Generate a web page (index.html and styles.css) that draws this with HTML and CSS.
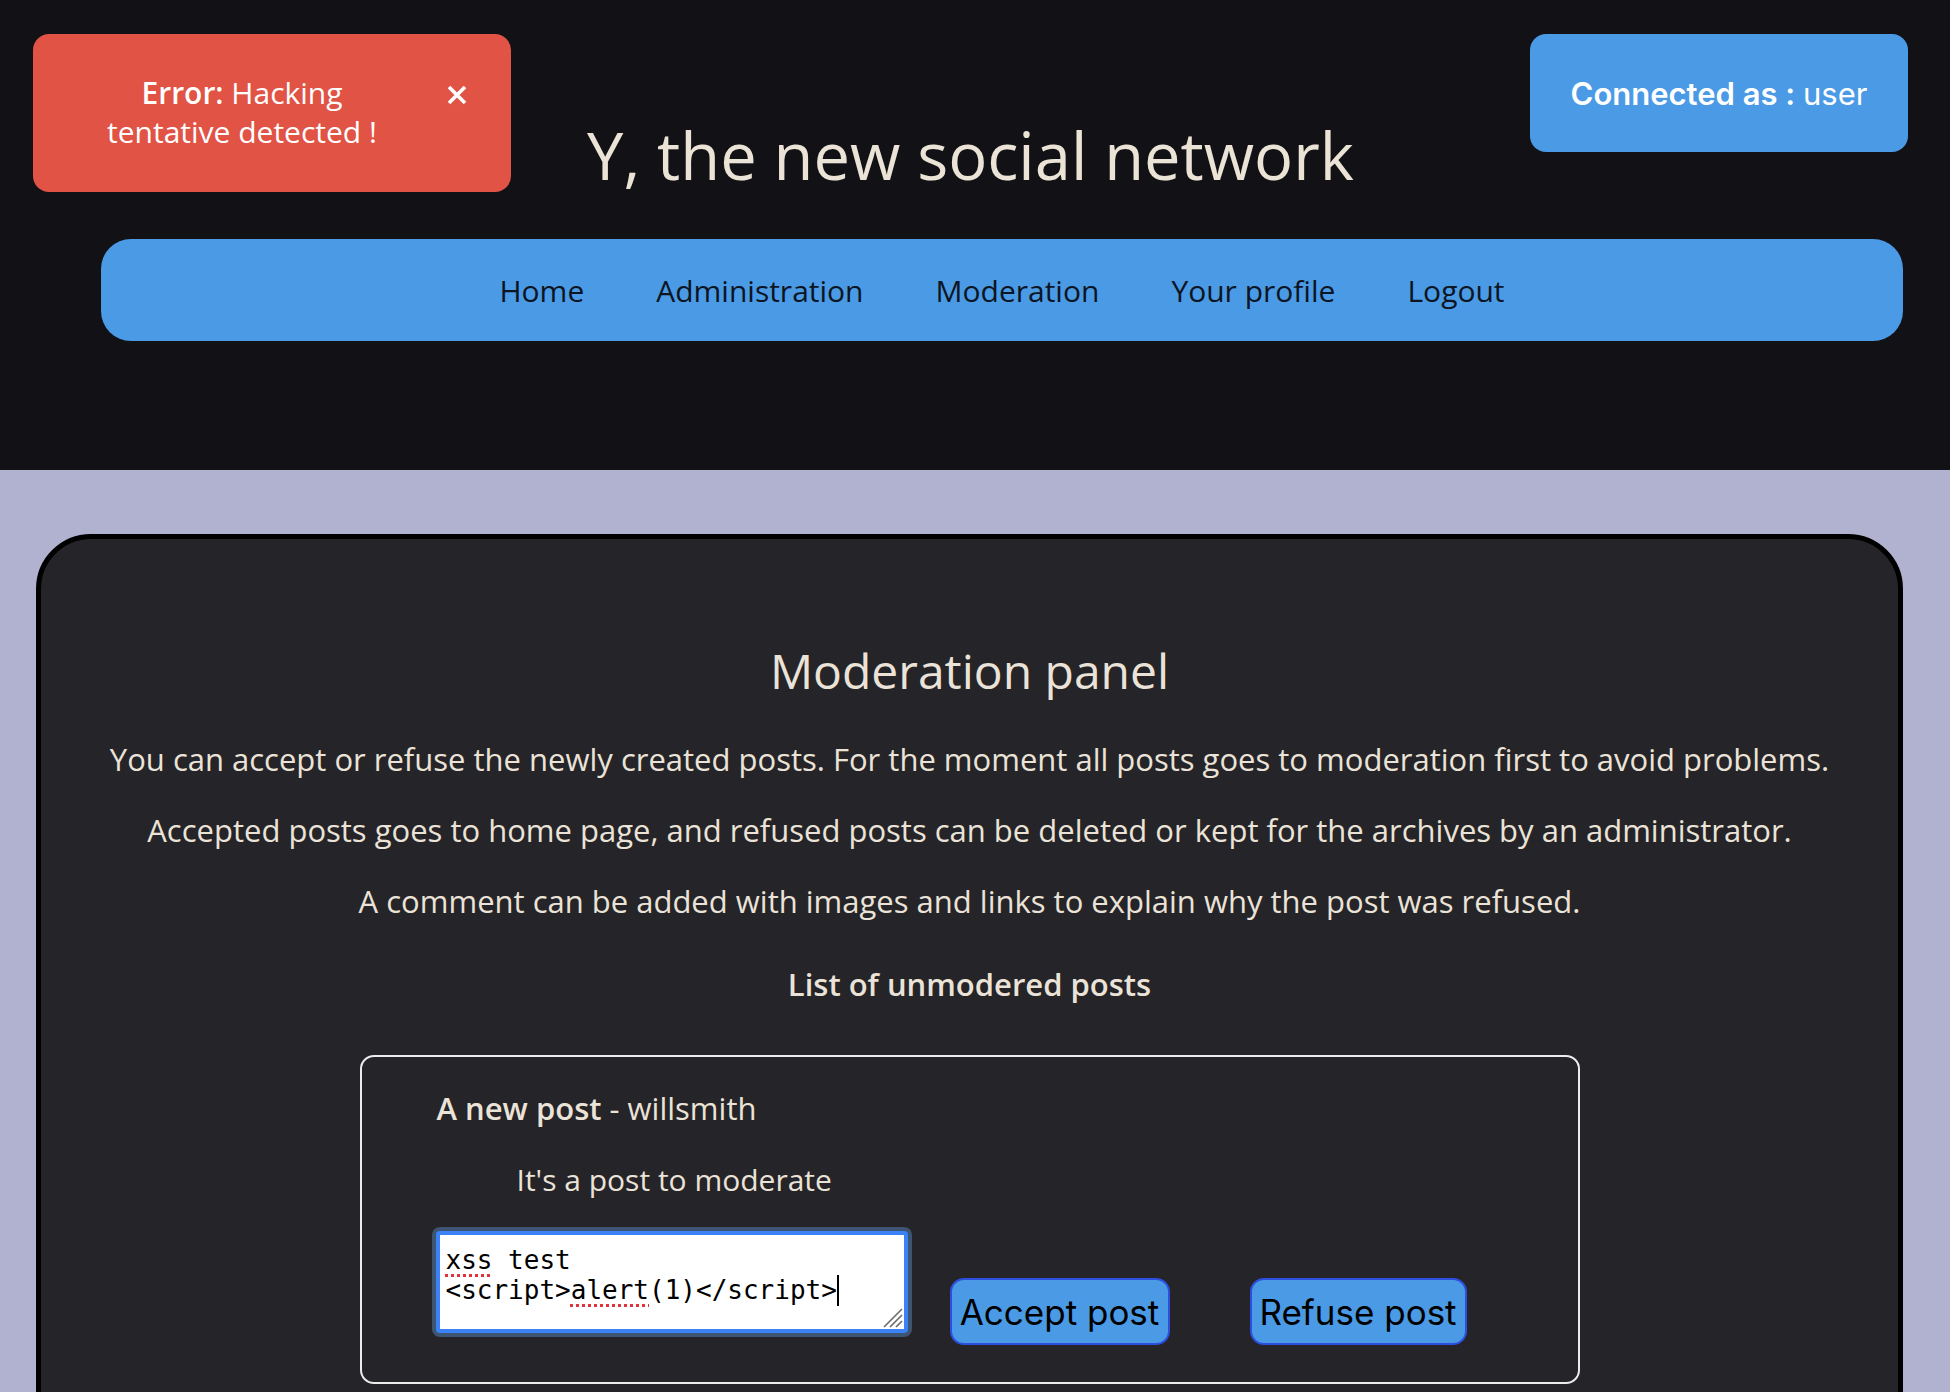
FILE: index.html
```html
<!DOCTYPE html>
<html lang="en">
<head>
<meta charset="utf-8">
<title>Y, the new social network - Moderation</title>
<link rel="stylesheet" href="styles.css">
</head>
<body>
<header class="site-header">
  <div class="top-row">
    <div class="toast" role="alert">
      <p class="toast-text"><strong>Error:</strong> Hacking tentative detected !</p>
      <button class="toast-close" aria-label="Close">
        <svg viewBox="0 0 22 20" width="22" height="20" aria-hidden="true"><path d="M3 2 L19 18 M19 2 L3 18" stroke="#fff" stroke-width="3.6" stroke-linecap="butt" fill="none"/></svg>
      </button>
    </div>
    <h1 class="site-title">Y, the new social network</h1>
    <div class="connected"><span class="connected-label">Connected as :</span> user</div>
  </div>
  <nav class="main-nav">
    <a href="#">Home</a>
    <a href="#">Administration</a>
    <a href="#">Moderation</a>
    <a href="#">Your profile</a>
    <a href="#">Logout</a>
  </nav>
</header>
<main class="page">
  <section class="panel">
    <h2 class="panel-title">Moderation panel</h2>
    <p class="panel-text">You can accept or refuse the newly created posts. For the moment all posts goes to moderation first to avoid problems.</p>
    <p class="panel-text">Accepted posts goes to home page, and refused posts can be deleted or kept for the archives by an administrator.</p>
    <p class="panel-text">A comment can be added with images and links to explain why the post was refused.</p>
    <h3 class="list-title">List of unmodered posts</h3>
    <article class="post">
      <h4 class="post-title"><strong>A new post</strong> - willsmith</h4>
      <p class="post-body">It's a post to moderate</p>
      <form class="post-actions">
        <div class="comment-box" role="textbox" aria-multiline="true"><span class="misspelled">xss</span> test<br>&lt;script&gt;<span class="misspelled">alert</span>(1)&lt;/script&gt;<span class="caret"></span>
          <svg class="grip" viewBox="0 0 24 24" width="24" height="24" aria-hidden="true"><path d="M23 5 L5 23 M23 11 L11 23 M23 17 L17 23" stroke="#6f6f6f" stroke-width="1.7" fill="none"/></svg>
        </div>
        <button type="button" class="btn btn-accept">Accept post</button>
        <button type="button" class="btn btn-refuse">Refuse post</button>
      </form>
    </article>
  </section>
</main>
</body>
</html>
```
FILE: styles.css
```css
* { box-sizing: border-box; }

body {
  margin: 0;
  background: #b1b2d0;
  font-family: "Open Sans", "Noto Sans", sans-serif;
  color: #ebe3d7;
}

.site-header {
  background: #111116;
  height: 470px;
  padding: 34px 42px 0 33px;
}

.top-row {
  display: grid;
  grid-template-columns: 1fr auto 1fr;
  align-items: start;
}

.toast {
  justify-self: start;
  width: 478px;
  height: 158px;
  background: #e05345;
  border-radius: 16px;
  display: flex;
  align-items: flex-start;
  padding: 39px 0 0 59px;
  color: #fff;
}

.toast-text {
  margin: 0;
  width: 300px;
  text-align: center;
  font-size: 30px;
  line-height: 39px;
}

.toast-text strong { font-weight: 600; }

.toast-close {
  margin: 12px 0 0 54px;
  padding: 0;
  border: 0;
  background: none;
  width: 22px;
  height: 20px;
  display: flex;
}

.site-title {
  margin: 81px 0 0;
  font-size: 65px;
  line-height: 80px;
  font-weight: 400;
  color: #ebe3d6;
  white-space: nowrap;
}

.connected {
  justify-self: end;
  width: 378px;
  height: 118px;
  background: #4a9ae6;
  border-radius: 16px;
  display: flex;
  align-items: center;
  justify-content: center;
  gap: 0.25em;
  font-family: Inter, Roboto, sans-serif;
  font-size: 31px;
  color: #fff;
}

.connected-label { font-weight: 600; }

.main-nav {
  margin: 44px 5px 0 68px;
  height: 102px;
  padding-top: 2px;
  background: #4a9ae6;
  border-radius: 30px;
  display: flex;
  align-items: center;
  justify-content: center;
  gap: 72px;
}

.main-nav a {
  color: #0c1521;
  text-decoration: none;
  font-size: 30px;
  line-height: 40px;
}

.page {
  padding: 64px 47px 0 36px;
}

.panel {
  background: #252429;
  border: 5px solid #000;
  border-radius: 55px;
  padding: 102px 0 60px;
  text-align: center;
}

.panel-title {
  margin: 0 0 38px;
  font-size: 48px;
  line-height: 60px;
  font-weight: 400;
}

.panel-text {
  margin: 0 0 31px;
  font-size: 31px;
  line-height: 40px;
}

.list-title {
  margin: 43px 0 51px;
  font-size: 31px;
  line-height: 40px;
  font-weight: 600;
}

.post {
  width: 1220px;
  margin: 0 auto;
  border: 2px solid #ececec;
  border-radius: 14px;
  padding: 31px 0 37px 75px;
  text-align: left;
}

.post-title {
  margin: 0 0 32px;
  font-size: 31px;
  line-height: 40px;
  font-weight: 400;
}

.post-title strong { font-weight: 600; }

.post-body {
  margin: 0 0 31px 80px;
  font-size: 30px;
  line-height: 40px;
}

.post-actions {
  display: flex;
  align-items: flex-start;
  margin: 0;
}

.comment-box {
  position: relative;
  margin-left: -1px;
  width: 472px;
  height: 102px;
  background: #fff;
  border: 4px solid #3b82f6;
  border-radius: 4px;
  box-shadow: 0 0 0 4px #3d5473;
  padding: 10px 6px 0;
  font-family: "DejaVu Sans Mono", "Liberation Mono", monospace;
  font-size: 26px;
  line-height: 30px;
  color: #000;
  white-space: nowrap;
}

.misspelled {
  text-decoration: underline dotted #e3323a;
  text-decoration-thickness: 3px;
  text-underline-offset: 5px;
}

.caret {
  display: inline-block;
  width: 2px;
  height: 31px;
  background: #000;
  vertical-align: -7px;
}

.grip {
  position: absolute;
  right: 1px;
  bottom: 1px;
}

.btn {
  margin-top: 47px;
  height: 67px;
  padding: 0 6px;
  background: #4a9ae6;
  border: 2px solid #2d4fe0;
  border-radius: 14px;
  font-family: Inter, Roboto, sans-serif;
  font-size: 35px;
  color: #000;
  white-space: nowrap;
}

.btn-accept { margin-left: 42px; width: 220px; }
.btn-refuse { margin-left: 80px; width: 217px; }
```
